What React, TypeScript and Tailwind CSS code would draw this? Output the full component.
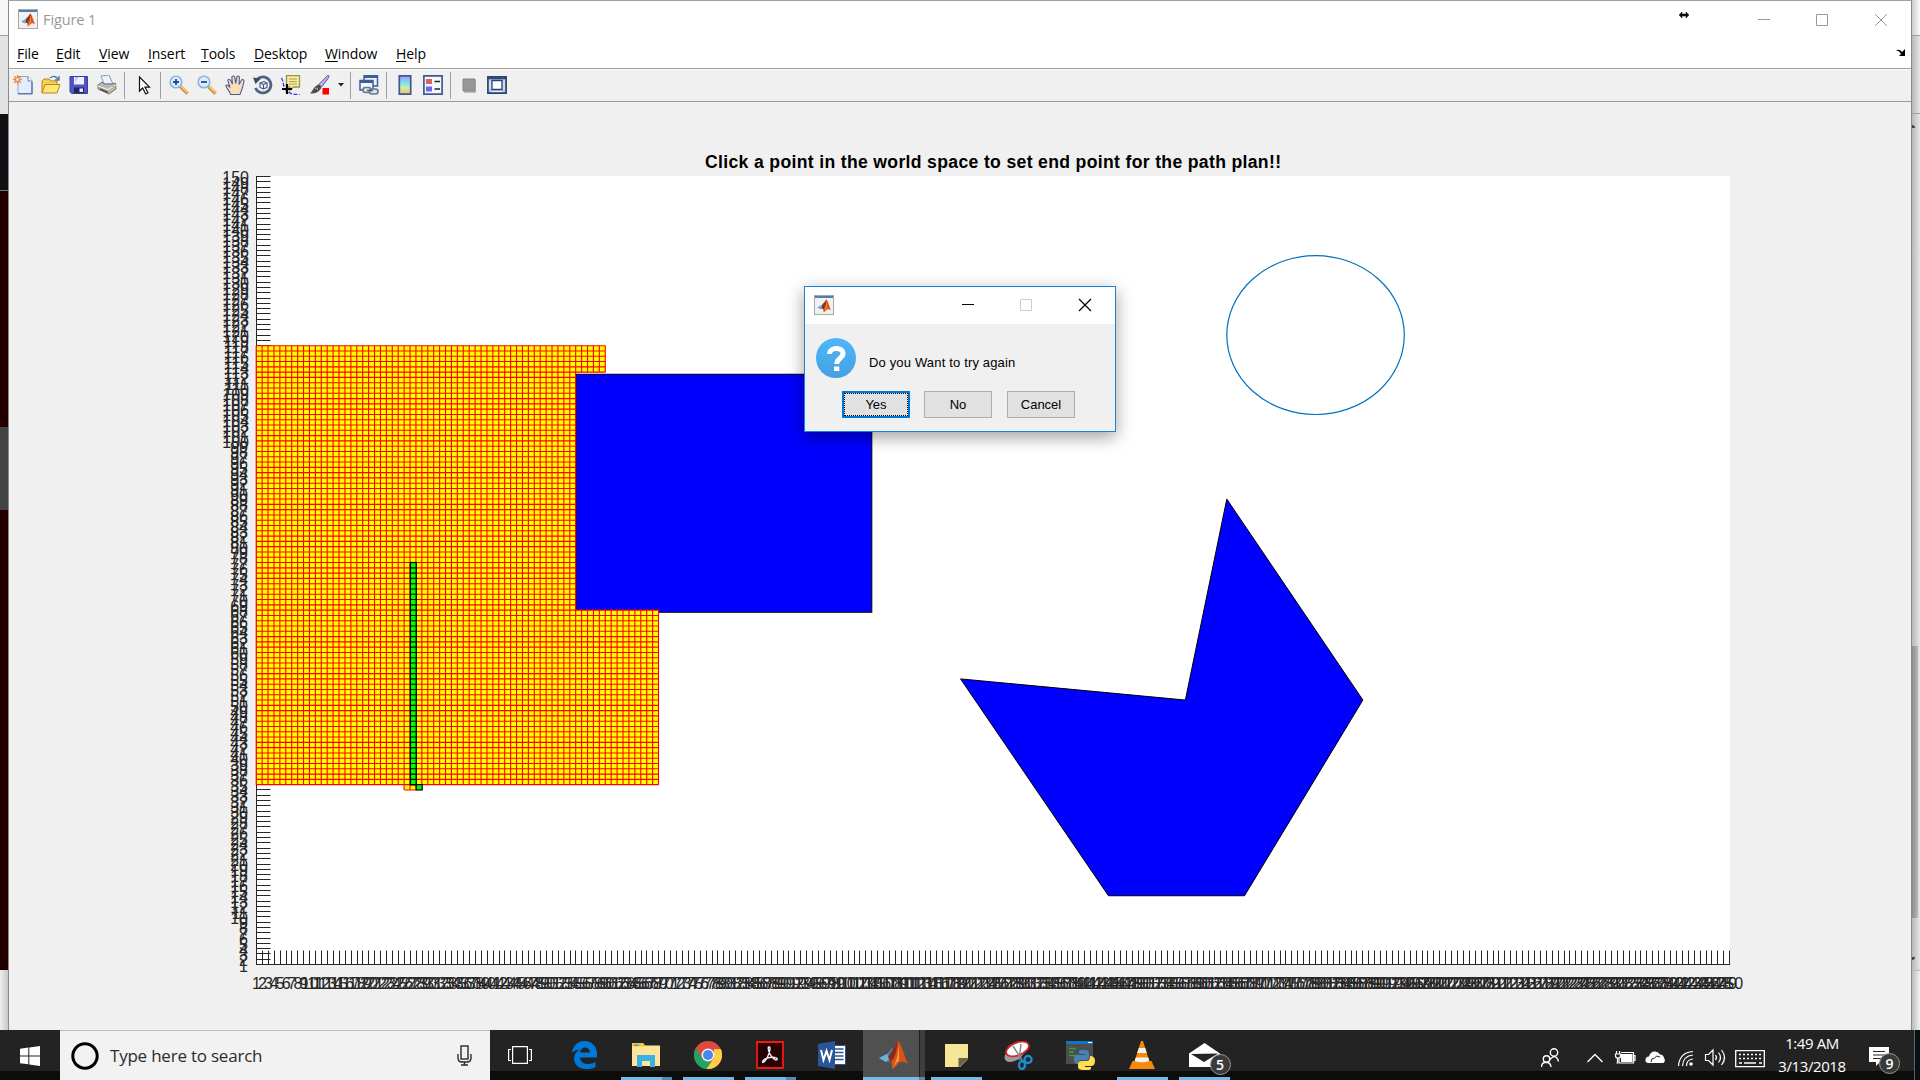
import React from "react";

const px = (v: number) => 256.5 + (v - 1) * 5.9165;
const py = (v: number) => 964.5 - (v - 1) * 5.289;
const range = (a: number, b: number) => Array.from({ length: b - a + 1 }, (_, i) => a + i);

function MatlabMark({ size }: { size: number }) {
  return (
    <svg width={size} height={size} viewBox="0 0 30 30">
      <path d="M1 18 9 14 14 8 18 11 13 21 8 22Z" fill="#3f86b5" />
      <path d="M1 18 9 14 12 18 8 22Z" fill="#69b3d6" />
      <path d="M20 1C16 7 14 12 10 17L13 22C14 24 14 26 14 29C19 27 20 22 23 22C26 21 28 23 30 24C26 16 24 4 20 1Z" fill="#d95319" />
      <path d="M20 1C16 7 13 13 10 17L13 22C17 18 19 10 20 1Z" fill="#8c2b1c" />
      <path d="M20 5C21 12 19 21 15 27.500C17 25 18.500 22 20.500 21C21.500 16 21.500 9 20 5Z" fill="#f7a541" />
    </svg>
  );
}

function WindowIcon() {
  return (
    <div className="flex h-5 w-5 flex-col border border-[#a8a8a8] bg-[#f1f1f1]">
      <div className="h-[2px] bg-[#4d80ad]" />
      <div className="flex flex-1 items-center justify-center">
        <MatlabMark size={14} />
      </div>
    </div>
  );
}

const I = ({ children, ml = "ml-2" }: { children: React.ReactNode; ml?: string }) => (
  <svg className={"shrink-0 " + ml} width="20" height="20" viewBox="0 0 20 20" fill="none">
    {children}
  </svg>
);
const Sep = ({ ml }: { ml: string }) => <div className={"h-[27px] w-px bg-[#a0a0a0] " + ml} />;

function Toolbar() {
  return (
    <div className="flex h-[34px] items-center border-t border-b border-[#9b9b9b] bg-[#f0f0f0] pl-1 shadow-[inset_0_1px_0_#fff]">
      <I ml="ml-0">
        <path d="M5 1.500h10l4 4V19H5Z" fill="#e3edfb" stroke="#8fa6cf" />
        <path d="M15 1.500V6h4" fill="#fff" stroke="#5c7bb5" />
        <path d="M5 18.600h14V7" stroke="#5c77ab" strokeWidth="1.400" />
        <path d="M4.500 0v9M0 4.500h9M1.300 1.300l6.400 6.400M7.700 1.300 1.300 7.700" stroke="#e88342" strokeWidth="1.300" />
        <circle cx="4.500" cy="4.500" r="2" fill="#ffe9b0" stroke="#e88342" />
      </I>
      <I>
        <path d="M1 18V6l2-2h5l2 2h6v3" fill="#f5cf55" stroke="#bb8712" />
        <path d="M1 18 4 9.500h15L16 18Z" fill="#ffe67a" stroke="#bb8712" />
        <path d="M9 3c3-2.500 6-2 8 1M18 1v4h-4" stroke="#52749a" strokeWidth="1.400" />
      </I>
      <I>
        <path d="M1 1.500h17.500v17H3L1 17Z" fill="#4f55c4" stroke="#3a3f9e" />
        <path d="M5 2h10v7.500H5Z" fill="#eef1fb" />
        <path d="M6 2h4l-4 6Z" fill="#c4cdf0" />
        <path d="M5 12.500h10V18H5Z" fill="#22265c" />
        <path d="M10.500 13.500H14V17h-3.500Z" fill="#e9ecf7" />
      </I>
      <I>
        <path d="m4 1 8-1 4 9H7Z" fill="#eaf3ff" stroke="#8497b0" />
        <path d="M1 10 5 7l2 2h8l3.500-1L19 14l-7 5-11-5Z" fill="#b9b9b4" stroke="#777" />
        <path d="m1 11 10 3.500L19 10" stroke="#eee" />
        <path d="m3 14 8 3.500" stroke="#4d4d4d" strokeWidth="1.500" />
        <circle cx="16.500" cy="11.500" r="1" fill="#d9a929" />
      </I>
      <Sep ml="ml-[7px]" />
      <I ml="ml-[10px]">
        <path d="M4.500 2v14l3.200-3 3 6 2.300-1.200-3-5.600h4.500Z" fill="#fff" stroke="#111" strokeWidth="1.200" />
      </I>
      <Sep ml="ml-[5px]" />
      <I>
        <path d="m11.500 11.500 7 7" stroke="#c98a3c" strokeWidth="3.600" />
        <path d="m12 11 6.500 6.500" stroke="#f7c777" strokeWidth="1.800" />
        <circle cx="7" cy="7" r="5.800" fill="#d8eefb" stroke="#8fb2de" strokeWidth="1.600" />
        <path d="M4 7h6M7 4v6" stroke="#204a9c" strokeWidth="1.800" />
      </I>
      <I>
        <path d="m11.500 11.500 7 7" stroke="#c98a3c" strokeWidth="3.600" />
        <path d="m12 11 6.500 6.500" stroke="#f7c777" strokeWidth="1.800" />
        <circle cx="7" cy="7" r="5.800" fill="#d8eefb" stroke="#8fb2de" strokeWidth="1.600" />
        <path d="M4 7h6" stroke="#204a9c" strokeWidth="1.800" />
      </I>
      <I>
        <path d="M5.500 19.500C5 16 1 13 .8 10.500c1.200-1.300 3 .5 4.200 2L2.800 5.500c.2-1.900 2.200-1.500 2.800.1L7.500 9 6.800 2.300c.3-1.900 2.500-1.700 2.900-.1L10.700 8.500l1.200-6.700c.6-1.400 2.600-.9 2.500.9L14 9.500 16.600 5c1-1 2.600-.1 2.400 1.400-1.200 4-1.200 6-2.500 9l-1.500 4.100Z" fill="#fbdcbb" stroke="#4a5f93" strokeWidth="1.100" />
      </I>
      <I>
        <path d="M4 4.500A8 8 0 1 1 2.500 13" stroke="#4e6385" strokeWidth="2.800" />
        <path d="M0 2.500 8 3.500 2.500 9Z" fill="#374b6c" />
        <path d="m7 8 4-1.500L14 8v4.500L10.500 14 7 12.500Zm0 0 3.500 1.500L14 8m-3.500 1.500V14" fill="#e8eefb" stroke="#40557c" strokeWidth="1.100" />
      </I>
      <I>
        <path d="M0 3c3 2 1 7 5 12s9 4 14 5" stroke="#3232e8" strokeWidth="1.300" strokeDasharray="4 1.500" />
        <path d="M5.500.7h13V12h-6L9 15.500V12H5.500Z" fill="#f5eda0" stroke="#9e953e" strokeWidth="1.300" />
        <path d="M8 4h8M8 6.500h8M8 9h8" stroke="#aaa151" />
        <path d="M6 9v10M1 14h10" stroke="#000" strokeWidth="2.200" />
      </I>
      <I ml="ml-[9px]">
        <path d="M18.500 0c1 1 0 3-1.500 5l-5.500 7-3-2.300L15 3.200C16.500 1.300 17.500.5 18.500 0Z" fill="#b7b3ed" stroke="#5d5b9b" />
        <path d="M8.500 9.500c2 .5 3 2 2.500 4C8 18 4 19 0 18.500c3-2 3-7 8.500-9Z" fill="#4c4c4c" />
        <path d="M5 13.500c2-1 3 0 2.500 1.500" stroke="#b9b9b9" />
        <path d="M12.500 13H19v6.500h-6.500Z" fill="#f00" />
      </I>
      <svg className="ml-2 shrink-0" width="6" height="4" viewBox="0 0 6 4"><path d="M0 0h6L3 3.500Z" fill="#222" /></svg>
      <Sep ml="ml-1.5" />
      <I>
        <path d="M5 .8h13.500V11H5Z" fill="#eaf2ff" stroke="#405d96" strokeWidth="1.500" />
        <path d="M5 2h13" stroke="#405d96" strokeWidth="2" />
        <path d="M1 5.500h13V15H1Z" fill="#f5f9ff" stroke="#405d96" strokeWidth="1.500" />
        <path d="M1 7h13" stroke="#405d96" strokeWidth="2" />
        <rect x="4" y="12.500" width="8" height="5" rx="2.400" fill="#dbe4ec" stroke="#667a8c" strokeWidth="1.700" />
        <rect x="10.500" y="14" width="8.500" height="5" rx="2.400" fill="#dbe4ec" stroke="#667a8c" strokeWidth="1.700" />
        <path d="M8 15.500h6" stroke="#4e6376" strokeWidth="1.500" />
      </I>
      <Sep ml="ml-[7px]" />
      <I>
        <defs>
          <linearGradient id="cb" x1="0" y1="0" x2="0" y2="1">
            <stop offset="0" stopColor="#a49cf0" />
            <stop offset=".35" stopColor="#80d8f5" />
            <stop offset=".65" stopColor="#c6f2a4" />
            <stop offset="1" stopColor="#ffb37a" />
          </linearGradient>
        </defs>
        <path d="M4.300.8h11.400v18.400H4.300Z" fill="url(#cb)" stroke="#40588c" strokeWidth="1.700" />
      </I>
      <I>
        <path d="M.9.900h18.200v18.200H.9Z" fill="#f4f8ff" stroke="#40588c" strokeWidth="1.700" />
        <path d="M3 4h6v5H3Z" fill="#e35f66" />
        <path d="M3 11.500h6v5H3Z" fill="#6b68e4" />
        <path d="M11.500 6.500H17M11.500 14H17" stroke="#222" strokeWidth="1.500" />
      </I>
      <Sep ml="ml-[7px]" />
      <I>
        <path d="M5 5h12v13H5Z" fill="#bcbcbc" />
        <path d="M4 4h12v12H4Z" fill="#969696" stroke="#868686" />
      </I>
      <I>
        <path d="M.9 1.900h18.200v16.200H.9Z" fill="#b8c8e6" stroke="#2b4272" strokeWidth="1.700" />
        <path d="M1 3.300h18" stroke="#2b4272" strokeWidth="1.800" />
        <path d="M5 5.500h10v9H5Z" fill="#fff" stroke="#2b4272" strokeWidth="1.300" />
        <path d="M3 6v8M17 6v8M5 16.500h10" stroke="#edf3ff" />
      </I>
    </div>
  );
}

const menus = [
  ["File", "w-[39px]"],
  ["Edit", "w-[43px]"],
  ["View", "w-[49px]"],
  ["Insert", "w-[53px]"],
  ["Tools", "w-[53px]"],
  ["Desktop", "w-[71px]"],
  ["Window", "w-[71px]"],
  ["Help", "w-[40px]"],
];

const Plot = () => {
  const box = (a: number, b: number, c: number, d: number) => ({
    x: px(a),
    y: py(d),
    width: px(b) - px(a),
    height: py(c) - py(d),
  });
  const grid = (a: number, b: number, c: number, d: number) =>
    range(a, b).map((v) => `M${px(v) - 0.3} ${py(c)}V${py(d)}`).join("") +
    range(c, d).map((v) => `M${px(a)} ${py(v)}H${px(b)}`).join("");
  const poly = [[120, 55], [158, 51], [165, 89], [188, 51], [168, 14], [145, 14]];
  return (
    <svg className="block" width="1902" height="928" viewBox="9 102 1902 928" fill="none">
      <path d="M256 176H1730V965H256Z" fill="#fff" />
      <text x="993" y="167.500" textAnchor="middle" textLength="576" fontFamily="Liberation Sans, Arial, sans-serif" fontWeight="700" fontSize="17.600" fill="#000">
        Click a point in the world space to set end point for the path plan!!
      </text>
      <path
        d={
          "M256.5 176V964.5H1730" +
          range(1, 250).map((v) => `M${Math.floor(px(v)) + 0.5} 965V950.500`).join("") +
          range(1, 150).map((v) => `M256 ${Math.floor(py(v)) + 0.5}H270.500`).join("")
        }
        stroke="#262626"
      />
      <g fontFamily="Liberation Sans, Arial, sans-serif" fontSize="16" fill="#262626">
        {range(1, 250).map((v) => (
          <text key={v} x={px(v)} y="989" textAnchor="middle">{v}</text>
        ))}
        {range(1, 150).map((v) => (
          <text key={v} x={v < 100 ? "248" : "249"} y={py(v) + 7} textAnchor="end">{v}</text>
        ))}
      </g>
      <rect {...box(1, 60, 113, 118)} fill="#ff0" />
      <rect {...box(1, 55, 35, 113)} fill="#ff0" />
      <rect {...box(26, 28, 34, 35)} fill="#ff0" />
      <rect {...box(55, 105, 67.6, 112.6)} fill="#00f" stroke="#000" />
      <rect {...box(55, 69, 35, 68)} fill="#ff0" />
      <path d={grid(1, 60, 113, 118) + grid(1, 55, 35, 113) + grid(55, 69, 35, 68) + grid(26, 28, 34, 35)} stroke="#f00" strokeWidth="1.100" />
      <rect {...box(27, 28, 35, 77)} fill="#0f0" stroke="#000" strokeWidth="1.300" />
      <path d={range(35, 77).map((v) => `M${px(27)} ${py(v)}H${px(28)}`).join("")} stroke="#000" strokeWidth="1.100" />
      <rect {...box(28, 29, 34, 35)} fill="#0f0" stroke="#000" strokeWidth="1.200" />
      <ellipse cx={px(180)} cy={py(120)} rx="88.750" ry="79.400" stroke="#0072bd" strokeWidth="1.200" />
      <polygon points={poly.map(([a, b]) => `${px(a)},${py(b)}`).join(" ")} fill="#00f" stroke="#000" />
    </svg>
  );
};

function Dialog() {
  const btn = "flex h-[27px] w-[68px] items-center justify-center bg-[#e1e1e1] text-[13px]";
  return (
    <div className="absolute top-[286px] left-[804px] flex h-[146px] w-[312px] flex-col border border-[#1883d7] bg-[#f0f0f0] font-['Liberation_Sans',Arial,sans-serif] text-black shadow-[0_5px_16px_rgba(0,0,0,0.38)]">
      <div className="flex h-[37px] shrink-0 items-center bg-white pb-[2px] pl-[9px]">
        <WindowIcon />
        <svg className="ml-[127px]" width="132" height="14" viewBox="0 0 132 14" fill="none">
          <path d="M1 6.500h12" stroke="#000" />
          <path d="M59.500 1.500h11v11h-11Z" stroke="#ccc" />
          <path d="m118 1 12 12m0-12-12 12" stroke="#000" strokeWidth="1.200" />
        </svg>
      </div>
      <div className="flex h-[54px] items-end pl-[11px]">
        <svg width="40" height="40" viewBox="0 0 40 40">
          <defs>
            <linearGradient id="qb" x1="0" y1="0" x2="0" y2="1">
              <stop offset="0" stopColor="#4db6fb" />
              <stop offset="1" stopColor="#44a1e2" />
            </linearGradient>
          </defs>
          <circle cx="20" cy="20" r="20" fill="url(#qb)" />
          <path d="M13.500 16c0-7 13.500-7.500 13.500-.5 0 5-6.300 4.500-6.300 10.500" fill="none" stroke="#fff" strokeWidth="5" />
          <path d="M18 28.500h5.300V33H18Z" fill="#fff" />
        </svg>
        <div className="mb-[7px] ml-[13px] text-[13px] leading-[16px] tracking-[0.16px] whitespace-nowrap">Do you Want to try again</div>
      </div>
      <div className="mt-[13px] flex pl-[37px]">
        <div className={btn + " border-2 border-[#0078d7] p-0"}>
          <div className="flex h-full w-full items-center justify-center border border-dotted border-black">Yes</div>
        </div>
        <div className={btn + " ml-[14px] border border-[#adadad]"}>No</div>
        <div className={btn + " ml-[15px] border border-[#adadad]"}>Cancel</div>
      </div>
    </div>
  );
}

function Slot({ children, bar = "", active = false, nudge = "" }: { children: React.ReactNode; bar?: string; active?: boolean; nudge?: string }) {
  return (
    <div className={"flex h-[50px] w-[62px] shrink-0 flex-col items-center " + (active ? "bg-[linear-gradient(90deg,#505050_56px,#1d1d1d_56px,#1d1d1d_57px,#3e3e3e_57px)]" : "")}>
      <div className={"flex h-[47px] items-center pt-[3px] " + nudge}>{children}</div>
      <div className={"h-[3px] " + bar} />
    </div>
  );
}

const full = "w-[51px] bg-[#76b9ed]";
const multi = "w-[51px] bg-[linear-gradient(90deg,#76b9ed_41px,#5588b2_41px)]";

function Badge({ n }: { n: string }) {
  return (
    <div className="absolute right-[-11px] bottom-[-8px] flex h-[21px] w-[21px] items-center justify-center rounded-full border border-[#9a9a9a] bg-[#3a3a3a] font-['Open_Sans',sans-serif] text-[14px] font-semibold text-white">
      {n}
    </div>
  );
}

function Taskbar() {
  return (
    <div className="flex h-[50px] bg-[linear-gradient(180deg,#232323_41px,#0c0c0b_41px)] text-white">
      <div className="flex w-[60px] items-center justify-center">
        <svg width="20" height="20" viewBox="0 0 20 20" fill="#fff" className="mt-[1px]">
          <path d="M0 2.800 8.300 1.600V9.400H0ZM9.300 1.400 20 0v9.400H9.300ZM0 10.400h8.300v7.900L0 17.200ZM9.300 10.400H20V20L9.300 18.500Z" />
        </svg>
      </div>
      <div className="flex w-[430px] items-center border-t border-[#bcbcbc] bg-[#f2f2f2] pl-[11px]">
        <svg width="28" height="28" viewBox="0 0 28 28" fill="none"><circle cx="14" cy="14" r="12.200" stroke="#000" strokeWidth="3" /></svg>
        <div className="ml-[11px] w-[347px] font-['Open_Sans',sans-serif] text-[17px] tracking-[-0.22px] text-[#2b2b2b]">Type here to search</div>
        <svg width="15" height="21" viewBox="0 0 15 21" fill="none" stroke="#2b2b2b" strokeWidth="1.400">
          <rect x="4" y="1" width="7" height="13" />
          <path d="M1 9v4q0 4 4 4h5q4 0 4-4V9M7.500 17v3M4 20h7" />
        </svg>
      </div>
      <div className="ml-px flex">
        <Slot nudge="pr-1 pt-[1px]">
          <svg width="24" height="18" viewBox="0 0 24 18" fill="none" stroke="#fff" strokeWidth="1.200"><path d="M4.600.6h14.800v16.800H4.600ZM3 3.500H.6v11H3M21 3.500h2.400v11H21" /></svg>
        </Slot>
        <Slot>
          <svg width="26" height="28" viewBox="0 0 26 28">
            <path d="M1 12C2 4 7 0 13.500 0 21 0 26 5.500 26 13v3.500H9c0 4 3.500 6.500 8 6.500 3 0 5.500-.8 7.500-2V26c-2.500 1.400-5.500 2-9 2C7.500 28 3 23 3 17.500 3 13.500 5 10.500 9 8.500 5.500 8.800 2.800 10 1 12ZM9.200 11.500h9.600C18.800 8.500 17 6.500 14.200 6.500c-2.900 0-4.700 2-5 5Z" fill="#0078d7" fillRule="evenodd" />
          </svg>
        </Slot>
        <Slot bar={multi}>
          <svg width="28" height="24" viewBox="0 0 28 24">
            <path d="M0 0h11l2 2.500h15V23H0Z" fill="#ffe59a" />
            <path d="M0 0h11l2 3.500H0Z" fill="#f6c33c" />
            <path d="M2 1.500h5v1.500H2Z" fill="#4aa0d8" />
            <path d="M5 24V12h18v12h-5v-6h-8v6Z" fill="#38b1e8" />
          </svg>
        </Slot>
        <Slot bar={full}>
          <svg width="28" height="28" viewBox="0 0 28 28">
            <circle cx="14" cy="14" r="14" fill="#dd4b3e" />
            <path d="M2 7 8 17.500l6 3.500-4 6.500A14 14 0 0 1 2 7Z" fill="#1fa463" />
            <path d="M14 28 20.500 17 20 8h6.700A14 14 0 0 1 14 28Z" fill="#ffcd46" />
            <path d="M14 28 9 27l5-6.500h4.500Z" fill="#1fa463" />
            <path d="M12.500 28 20 17V8.500h6.700A14 14 0 0 1 12.500 28Z" fill="#ffcd46" />
            <circle cx="14" cy="14" r="6.500" fill="#f4f4f4" />
            <circle cx="14" cy="14" r="5" fill="#4688f1" />
          </svg>
        </Slot>
        <Slot bar={multi} nudge="pt-[1px]">
          <svg width="28" height="28" viewBox="0 0 28 28" fill="none">
            <path d="M1 1h26v26H1Z" fill="#260202" stroke="#f21a0a" strokeWidth="1.800" />
            <path d="M12.500 6c3-1 1 6-1 10s-4.500 6.500-5 5c-.5-2 5-4.500 9-4.700 4-.3 6.500 1 5.500 2.200-1.500 1.500-5-1.500-7-5.500C12.500 10 12 7 12.500 6Z" stroke="#eee" strokeWidth="1.400" />
          </svg>
        </Slot>
        <Slot>
          <svg width="28" height="28" viewBox="0 0 28 28">
            <path d="M13 4.500h14.500v19H13Z" fill="#fff" stroke="#2a5699" />
            <path d="M15 8h10.500M15 11.500h10.500M15 15h10.500M15 18.500h10.500" stroke="#2a5699" strokeWidth="1.500" />
            <path d="M0 3 17 0v28L0 25Z" fill="#2a5699" />
            <path d="m3 9 2.500 10L8.500 10l3 9L14 9" fill="none" stroke="#fff" strokeWidth="2" />
          </svg>
        </Slot>
        <Slot active nudge="pr-[2px]" bar="w-[62px] bg-[linear-gradient(90deg,#76b9ed_56px,#5588b2_56px)]">
          <MatlabMark size={30} />
        </Slot>
        <Slot bar={full}>
          <svg width="23" height="23" viewBox="0 0 23 23"><path d="M0 0h23v15l-8 8H0Z" fill="#f5e795" /><path d="M23 14v1l-8.500 8L13.500 23V14Z" fill="#6b6747" /></svg>
        </Slot>
        <Slot>
          <svg width="29" height="29" viewBox="0 0 29 29" fill="none">
            <ellipse cx="10.500" cy="13" rx="11" ry="6.500" transform="rotate(-32 10.500 13)" fill="#9c9c9c" />
            <ellipse cx="13.500" cy="8" rx="12" ry="6.300" transform="rotate(-22 13.500 8)" fill="#fff" stroke="#d6252e" strokeWidth="1.800" />
            <path d="m9 5 9 14M17 3l-2 16" stroke="#888" strokeWidth="1.500" />
            <circle cx="24" cy="18.500" r="3.500" stroke="#1b8cce" strokeWidth="2.400" />
            <ellipse cx="18" cy="24" rx="3" ry="4" stroke="#1b8cce" strokeWidth="2.400" />
          </svg>
        </Slot>
        <Slot>
          <svg width="29" height="29" viewBox="0 0 29 29">
            <path d="M0 0h27v23H0Z" fill="#4a4f4c" />
            <path d="M0 0h27v3H0Z" fill="#1073c4" />
            <path d="M22 1h4v1h-4Z" fill="#fff" />
            <path d="M3 7.500h7M3 11h5M3 14.500h6" stroke="#3c9a4b" strokeWidth="1.300" />
            <path d="M14 9h6q3 0 3 3v4q0 3-3 3h-5q-3 0-3 4-4 0-4-5t4-4h7v-1h-6v-2q0-2 1-2Z" fill="#4383b6" />
            <path d="M17 29q-5 0-5-3v-3q0-3 4-3h5q3 0 3-5 5 0 5 5t-4 5h-6v1h6v1q0 2-3 2Z" fill="#ffdc52" />
          </svg>
        </Slot>
        <Slot bar={full}>
          <svg width="26" height="28" viewBox="0 0 26 28">
            <path d="M3.500 20h19L26 28H0Z" fill="#f58a0b" />
            <path d="m12 0h2l7 22q-8 4-16 0Z" fill="#f58a0b" />
            <path d="m9.800 7h6.400l1.500 5H8.200ZM6.700 16.500h12.600l1 3.500q-7.300 2.500-14.600 0Z" fill="#f2f2f2" />
          </svg>
        </Slot>
        <Slot bar={full}>
          <div className="relative">
            <svg width="31" height="24" viewBox="0 0 31 24"><path d="M0 10.500 15.500 0 31 10.500V24H0Z" fill="#fff" /><path d="m2 11 27-.5L15 19Z" fill="#242424" /></svg>
            <Badge n="5" />
          </div>
        </Slot>
      </div>
      <div className="ml-auto flex w-[379px] items-center">
        <svg className="mt-[5px]" width="224" height="20" viewBox="1541 1045 224 20" fill="none" stroke="#fff" strokeWidth="1.400">
          <circle cx="1554" cy="1049.500" r="3.700" />
          <circle cx="1546.500" cy="1056" r="3.200" />
          <path d="M1549.500 1057q4-5 7-2.500 1.500 1.500 2 4M1541.500 1064q0-4 3-4.500h3q3 .500 3.500 4.500" />
          <path d="m1587.500 1059 7.500-7.500 7.500 7.500" />
          <path d="M1621 1049.500h12.500v10.500H1619v-5M1633.500 1052.500h1.500v5h-1.500M1617.500 1055v5h-1M1616.500 1048v3m3-3v3m-4 0h5v2q0 2-2.500 2t-2.500-2Z" strokeWidth="1.200" />
          <path d="M1621 1051h11.500v8H1621Z" fill="#fff" stroke="none" />
          <path d="M1648 1060q-3-.5-2.500-3.500.5-3 3.500-3 1.500-5.500 6.500-5 3 .3 4.500 3 3.500 0 4 3.500 2 2.500-.5 5Z" fill="#fff" stroke="none" />
          <path d="M1651 1059q0-4 3.500-4 2-3.500 5.500-1" stroke="#232323" strokeWidth="1" />
          <circle cx="1691" cy="1061" r="1.800" fill="#fff" stroke="none" />
          <path d="M1686.500 1063q0-6.500 6.500-7M1682.500 1063q.5-10 10.500-11M1678.500 1063q1-13.500 14.500-14.500" strokeWidth="1.200" />
          <path d="M1705.500 1051.500h3l4.500-4.500v15l-4.500-4.500h-3ZM1715.500 1052q2 2.500 0 5M1718.500 1049.500q4 5 0 10M1721.500 1047q6 7.500 0 15" strokeWidth="1.200" />
          <path d="M1735.700 1047.700h28.600v16h-28.600Z" strokeWidth="1.300" />
          <path d="M1739 1051.500h23M1739 1055.500h23" strokeDasharray="2 2" strokeWidth="1.300" />
          <path d="M1739 1060h3m2 0h12m3 0h3" strokeWidth="1.300" />
        </svg>
        <div className="mt-[-1px] w-[94px] text-center font-['Open_Sans',sans-serif] text-[15px] leading-[23px] tracking-[-0.42px]">
          <div>1:49 AM</div>
          <div>3/13/2018</div>
        </div>
        <div className="relative ml-[10px]">
          <svg className="mt-[2px]" width="20" height="19" viewBox="0 0 20 19"><path d="M0 0h20v15H11l-4 4v-4H0Z" fill="#fff" /><path d="M4 4.500h12M4 8h12M4 11.500h8" stroke="#232323" strokeWidth="1.200" /></svg>
          <Badge n="9" />
        </div>
        <div className="ml-auto h-[50px] w-px bg-[#5d6467]" />
        <div className="h-[50px] w-[5px] bg-[#081014]" />
      </div>
    </div>
  );
}

export default function App() {
  return (
    <div className="relative h-[1080px] w-[1920px] overflow-hidden bg-[#e8e8e8]">
      <div className="flex h-[1030px]">
        <div className="flex w-2 shrink-0 flex-col">
          <div className="h-[35px] bg-[#f6f6f6]" />
          <div className="h-[79px] border-t border-[#a0a0a0] bg-[#e2e2e2]" />
          <div className="h-[76px] bg-[#101015]" />
          <div className="h-[237px] border-t border-[#777] bg-[#230000]" />
          <div className="h-[83px] bg-[#424242]" />
          <div className="h-[460px] bg-[#230000]" />
          <div className="flex-1 bg-[linear-gradient(90deg,#eee,#c8c8c8)]" />
        </div>
        <div className="w-[1904px] shrink-0 border-x border-t border-x-[#8a8a8a] border-t-[#a0a0a0] bg-[#f0f0f0]">
          <div className="flex h-[36px] items-center bg-white pl-[9px]">
            <WindowIcon />
            <div className="mt-px ml-[5px] font-['Open_Sans',sans-serif] text-[14.5px] tracking-[-0.1px] text-[#999]">Figure 1</div>
            <svg className="mt-[-1px] ml-auto" width="208" height="24" viewBox="1679 6 208 24" fill="none">
              <path d="M1679 14l3-3v2h4v-2l3 3-3 3v-2h-4v2Z" fill="#111" stroke="#111" strokeWidth=".5" />
              <path d="M1758 18.500h12M1816.500 13.500h11v11h-11ZM1875 13l12 12m0-12-12 12" stroke="#999" />
            </svg>
            <div className="w-[24px]" />
          </div>
          <div className="flex h-[31px] items-center bg-white pt-[2px] pl-2 font-['Open_Sans',sans-serif] text-[14px] tracking-[-0.1px] text-black">
            {menus.map(([m, w]) => (
              <div key={m} className={w}>
                <span className="underline underline-offset-2">{m[0]}</span>
                {m.slice(1)}
              </div>
            ))}
            <svg className="mt-[-2px] mr-[5px] ml-auto" width="10" height="8" viewBox="0 0 10 8"><path d="M0 2Q3-1 6 3L9 0V7H3L5 5Q3 1 0 2Z" fill="#000" /></svg>
          </div>
          <Toolbar />
          <Plot />
        </div>
        <div className="flex w-2 shrink-0 flex-col bg-[linear-gradient(90deg,#b8b8b8,#e6e6e6)]">
          <div className="h-[35px] bg-[linear-gradient(90deg,#ccc,#fafafa)]" />
          <div className="h-[78px] border-t border-[#a0a0a0]" />
          <div className="h-[533px] border-t border-[#a0a0a0] pt-[11px]">
            <div className="h-[3px] w-[3px] rounded-tr-full bg-[#444]" />
          </div>
          <div className="h-[272px] w-[6px] bg-[linear-gradient(90deg,#8c8c8c,#b8b8b8)]" />
          <div className="h-[52px] pt-[39px]">
            <div className="h-[3px] w-[3px] rounded-br-full bg-[#444]" />
          </div>
          <div className="flex-1 border-t border-[#bbb] bg-[linear-gradient(90deg,#bbb,#f2f2f2)]" />
        </div>
      </div>
      <Taskbar />
      <Dialog />
    </div>
  );
}
